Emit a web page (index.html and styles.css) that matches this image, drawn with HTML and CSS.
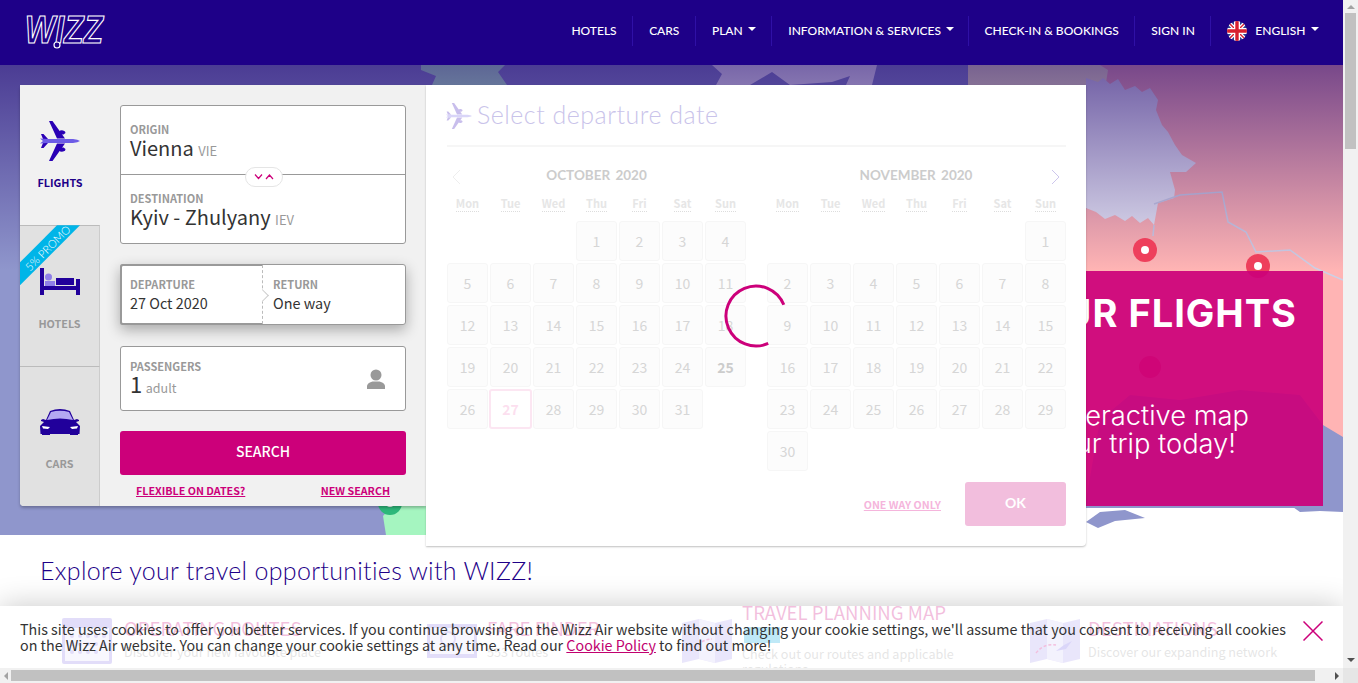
FILE: index.html
```html
<!DOCTYPE html>
<html lang="en">
<head>
<meta charset="utf-8">
<title>Wizz Air</title>
<link rel="stylesheet" href="styles.css">
</head>
<body>
<div class="frame">
  <div class="page">
    <header class="topbar">
      <a class="logo" href="#">
        <svg class="logo-svg" width="110" height="40" viewBox="0 0 110 40"><text class="logo-text" x="3" y="32" textLength="78" lengthAdjust="spacingAndGlyphs">WIZZ</text><circle class="logo-dot" cx="35" cy="34" r="3"/></svg>
      </a>
      <nav class="nav">
        <a class="nav-item">HOTELS</a>
        <a class="nav-item">CARS</a>
        <a class="nav-item">PLAN<i class="caret"></i></a>
        <a class="nav-item nav-info">INFORMATION &amp; SERVICES<i class="caret"></i></a>
        <a class="nav-item">CHECK-IN &amp; BOOKINGS</a>
        <a class="nav-item">SIGN IN</a>
        <a class="nav-item nav-lang">
          <svg class="flag" width="20" height="20" viewBox="0 0 20 20"><defs><clipPath id="fc"><circle cx="10" cy="10" r="10"/></clipPath></defs><g clip-path="url(#fc)"><rect width="20" height="20" fill="#2b3f93"/><path d="M0 0L20 20M20 0L0 20" stroke="#fff" stroke-width="4"/><path d="M0 0L20 20M20 0L0 20" stroke="#d8202f" stroke-width="1.4"/><path d="M10 0V20M0 10H20" stroke="#fff" stroke-width="6"/><path d="M10 0V20M0 10H20" stroke="#d8202f" stroke-width="3.4"/></g></svg>
          ENGLISH<i class="caret"></i>
        </a>
      </nav>
    </header>

    <section class="hero">
      <svg class="map" width="1343" height="470" viewBox="0 65 1343 470">
        <defs><linearGradient id="dim" x1="0" y1="0" x2="0" y2="1"><stop offset="0" stop-color="#1e006e" stop-opacity=".6"/><stop offset="1" stop-color="#1e006e" stop-opacity="0"/></linearGradient></defs>
        <rect x="0" y="65" width="1343" height="470" fill="#8f96cc"/>
        <path fill="#bbffcf" d="M421 65H505L498 72 507 85H432L436 76 421 70Z"/>
        <path fill="#fff" d="M712 65H877L872 85H846L850 76 832 82 790 85 772 72 750 85H716L722 74Z"/>
        <path fill="#fff5c3" d="M968 65H1108V200H968Z"/>
        <path fill="#ffb4b4" d="M1100 65H1343V437L1323 425 1300 395 1240 390 1180 400 1130 395 1100 420 1086 500V210L1108 70Z"/>
        <path fill="#e8e8f4" d="M1086 78L1098 82 1103 78 1110 84 1118 79 1125 90 1135 86 1142 92 1150 88 1158 100 1156 110 1162 125 1168 132 1175 145 1182 155 1196 163 1186 172 1170 172 1175 190 1174 198 1158 203 1154 225 1148 218 1140 223 1132 216 1125 221 1115 215 1105 219 1096 212 1086 208Z"/>
        <path class="border-line" d="M1154 204L1180 195 1222 192 1228 222 1246 232 1256 252 1290 250 1315 268 1343 280"/>
        <path class="border-line" d="M1154 225L1153 236"/>
        <path fill="#a5f5c0" d="M383 516L392 506H426V535H386Z"/>
        <path fill="#fff" d="M1000 508H1343V535H1000Z"/>
        <path fill="#8f96cc" d="M1086 522L1100 512 1125 510 1145 518 1115 521 1098 528ZM1290 505H1343V512L1320 511 1300 512Z"/>
        <rect x="0" y="65" width="1343" height="205" fill="url(#dim)"/>
        <g><circle cx="390" cy="503" r="12" fill="#2db87a"/><circle cx="390" cy="503" r="4" fill="#fff"/></g>
        <g><circle cx="1145" cy="250" r="12" fill="#ee3f5c"/><circle cx="1145" cy="250" r="4" fill="#fff"/></g>
        <g><circle cx="1258" cy="266" r="12" fill="#ee3f5c"/><circle cx="1258" cy="266" r="4" fill="#fff"/></g>
        <g><circle cx="1150" cy="367" r="11" fill="#ee3f5c"/></g>
      </svg>

      <aside class="banner">
        <h2 class="banner-title">PLAN YOUR FLIGHTS</h2>
        <p class="banner-line banner-line-a">Use our interactive map</p>
        <p class="banner-line banner-line-b">and plan your trip today!</p>
      </aside>

      <div class="panel">
        <div class="tabs">
          <div class="tab tab-active">
            <svg class="tab-icon" width="40" height="40" viewBox="0 0 40 40"><g id="plane"><path fill="#2a00b5" d="M9 0h3.500L25 17.500H17ZM9 40h3.500L25 22.500H17ZM1 13h2.500L8 18H3ZM1 27h2.500L8 22H3Z"/><path fill="#2a00b5" d="M19 10.500a3.500 2.500 0 0 1 6.500 1.500l-2 1.500h-3zM19 29.500a3.500 2.500 0 0 0 6.500-1.500l-2-1.500h-3z"/><path fill="#6d5ce6" d="M0 17.500L8 18H33Q38 18.500 40 20 38 21.500 33 22H8L0 22.500 3 20Z"/></g></svg>
            <span class="tab-label">FLIGHTS</span>
          </div>
          <div class="tab">
            <span class="ribbon-band"></span><span class="ribbon-text">5% PROMO</span>
            <svg class="tab-icon" width="40" height="40" viewBox="0 0 40 40"><path fill="#21009b" d="M0 7h4v27H0zM36 18h4v16h-4zM4 25h32v4H4z"/><circle cx="8.500" cy="16" r="3.500" fill="#8f7fe8"/><path fill="#8f7fe8" d="M5 20h10v5H5z"/><path fill="#21009b" d="M16 17h18v7H16z"/></svg>
            <span class="tab-label">HOTELS</span>
          </div>
          <div class="tab tab-cars">
            <svg class="tab-icon" width="40" height="40" viewBox="0 0 40 40"><path fill="#21009b" d="M2 33h8v-2H2zM30 33h8v-2h-8z"/><path fill="#21009b" d="M10 9Q20 5 30 9L34 18 37 17 39 18 39 19 36 20 40 24 39.500 32H.5L0 24 4 20 1 19 1 18 3 17 6 18Z"/><path fill="#b3a8f2" d="M7 18L11 10Q20 7.500 29 10L33 18Q20 15 7 18Z"/><path fill="#fff" d="M2 24L10 25 8 27 3 26.500ZM38 24L30 25 32 27 37 26.500Z"/></svg>
            <span class="tab-label">CARS</span>
          </div>
        </div>
        <form class="form">
          <div class="field route">
            <div class="route-part route-part-origin">
              <label class="field-label">ORIGIN</label>
              <div class="city">Vienna <small class="code">VIE</small></div>
            </div>
            <div class="route-part route-part-dest">
              <label class="field-label">DESTINATION</label>
              <div class="city">Kyiv - Zhulyany <small class="code">IEV</small></div>
            </div>
            <button class="swap" type="button"><svg width="20" height="8" viewBox="0 0 20 8"><path d="M1 1.500L4.500 5.500 8 1.500M12 6L15.500 2 19 6" fill="none" stroke="#cc007a" stroke-width="1.200"/></svg></button>
          </div>
          <div class="field dates">
            <div class="date-part date-active">
              <label class="field-label">DEPARTURE</label>
              <div class="date-value">27 Oct 2020</div>
            </div>
            <div class="date-part date-return">
              <span class="notch"></span>
              <label class="field-label">RETURN</label>
              <div class="date-value">One way</div>
            </div>
          </div>
          <div class="field passengers">
            <div class="pax-info">
              <label class="field-label">PASSENGERS</label>
              <div class="pax"><span class="pax-num">1</span> <small class="pax-unit">adult</small></div>
            </div>
            <svg width="18" height="20" viewBox="0 0 18 20"><circle cx="9" cy="6" r="5.500" fill="#999"/><path d="M0 20V16.500Q1 13.500 5.500 12.500H12.500Q17 13.500 18 16.500V20Z" fill="#999"/></svg>
          </div>
          <button class="search" type="button">SEARCH</button>
          <div class="links"><a class="link">FLEXIBLE ON DATES?</a><a class="link">NEW SEARCH</a></div>
        </form>
      </div>

      <div class="calendar">
        <div class="cal-head">
          <svg class="cal-plane" width="26" height="26" viewBox="0 0 40 40"><use href="#plane"/></svg>
          <h2 class="cal-title">Select departure date</h2>
        </div>
        <div class="months">
          <div class="month">
            <div class="month-head"><svg class="chev" width="9" height="16" viewBox="0 0 9 16"><path d="M8 1L1 8 8 15" fill="none" stroke="#eee"/></svg><h3 class="month-name">OCTOBER 2020</h3><span class="chev-slot"></span></div>
            <div class="weekdays"><abbr>Mon</abbr><abbr>Tue</abbr><abbr>Wed</abbr><abbr>Thu</abbr><abbr>Fri</abbr><abbr>Sat</abbr><abbr>Sun</abbr></div>
            <div class="days">
              <span class="gap-3"></span>
              <span class="day">1</span><span class="day">2</span><span class="day">3</span><span class="day">4</span>
              <span class="day">5</span><span class="day">6</span><span class="day">7</span><span class="day">8</span><span class="day">9</span><span class="day">10</span><span class="day">11</span>
              <span class="day">12</span><span class="day">13</span><span class="day">14</span><span class="day">15</span><span class="day">16</span><span class="day">17</span><span class="day">18</span>
              <span class="day">19</span><span class="day">20</span><span class="day">21</span><span class="day">22</span><span class="day">23</span><span class="day">24</span><span class="day day-bold">25</span>
              <span class="day">26</span><span class="day day-selected">27</span><span class="day">28</span><span class="day">29</span><span class="day">30</span><span class="day">31</span>
            </div>
          </div>
          <div class="month">
            <div class="month-head"><span class="chev-slot"></span><h3 class="month-name">NOVEMBER 2020</h3><svg class="chev chev-next" width="9" height="16" viewBox="0 0 9 16"><path d="M1 1L8 8 1 15" fill="none" stroke="#cdc6ec"/></svg></div>
            <div class="weekdays"><abbr>Mon</abbr><abbr>Tue</abbr><abbr>Wed</abbr><abbr>Thu</abbr><abbr>Fri</abbr><abbr>Sat</abbr><abbr>Sun</abbr></div>
            <div class="days">
              <span class="gap-6"></span>
              <span class="day">1</span>
              <span class="day">2</span><span class="day">3</span><span class="day">4</span><span class="day">5</span><span class="day">6</span><span class="day">7</span><span class="day">8</span>
              <span class="day">9</span><span class="day">10</span><span class="day">11</span><span class="day">12</span><span class="day">13</span><span class="day">14</span><span class="day">15</span>
              <span class="day">16</span><span class="day">17</span><span class="day">18</span><span class="day">19</span><span class="day">20</span><span class="day">21</span><span class="day">22</span>
              <span class="day">23</span><span class="day">24</span><span class="day">25</span><span class="day">26</span><span class="day">27</span><span class="day">28</span><span class="day">29</span>
              <span class="day">30</span>
            </div>
          </div>
        </div>
        <div class="cal-foot"><a class="one-way">ONE WAY ONLY</a><button class="ok" type="button">OK</button></div>
        <svg class="spinner" width="66" height="66" viewBox="0 0 66 66"><path d="M60.800 21.800A30 30 0 1 0 45.200 60.400" fill="none" stroke="#cc007a" stroke-width="3"/></svg>
      </div>
    </section>

    <section class="explore">
      <h2 class="explore-title">Explore your travel opportunities with WIZZ!</h2>
      <div class="cards">
        <div class="card">
          <svg class="card-icon" width="50" height="46" viewBox="0 0 50 46"><rect width="50" height="46" rx="2" fill="#8a78e6"/><rect x="3" y="10" width="44" height="33" fill="#e4e0fb"/><g fill="#8a78e6"><circle cx="10" cy="18" r="2"/><circle cx="18" cy="18" r="2"/><circle cx="26" cy="18" r="2"/><circle cx="34" cy="18" r="2"/><circle cx="42" cy="18" r="2"/><circle cx="10" cy="26" r="2"/><circle cx="18" cy="26" r="2"/><circle cx="26" cy="26" r="2"/><circle cx="34" cy="26" r="2"/><circle cx="42" cy="26" r="2"/><circle cx="10" cy="34" r="2"/><circle cx="18" cy="34" r="2"/><circle cx="26" cy="34" r="2"/><circle cx="34" cy="34" r="2"/></g></svg>
          <div class="card-body"><div class="card-title">OPERATING ROUTES</div><div class="card-sub">Discover your new favourite place</div></div>
        </div>
        <div class="card">
          <svg class="card-icon" width="50" height="34" viewBox="0 0 50 34"><rect width="50" height="34" fill="#8a78e6"/><rect x="3" y="4" width="44" height="26" fill="#e4e0fb"/><circle cx="21" cy="15" r="7" fill="none" stroke="#8a78e6" stroke-width="2"/><path d="M26 20l7 7" stroke="#8a78e6" stroke-width="2"/></svg>
          <div class="card-body"><div class="card-title">FARE FINDER</div><div class="card-sub">553 routes</div></div>
        </div>
        <div class="card card-tall">
          <svg class="card-icon" width="50" height="44" viewBox="0 0 50 44"><path fill="#a99cef" d="M0 4L17 0 33 4 50 0V40L33 44 17 40 0 44Z"/><path fill="#d0c9f8" d="M17 0L33 4V44L17 40Z"/><path d="M8 32Q20 20 30 20" fill="none" stroke="#cc007a" stroke-width="1.500" stroke-dasharray="3 2"/></svg>
          <div class="card-body"><span class="mark"></span><div class="card-title">TRAVEL PLANNING MAP</div><div class="card-sub">Check out our routes and applicable regulations</div></div>
        </div>
        <div class="card">
          <svg class="card-icon" width="50" height="44" viewBox="0 0 50 44"><path fill="#a99cef" d="M0 4L17 0 33 4 50 0V40L33 44 17 40 0 44Z"/><path fill="#d0c9f8" d="M17 0L33 4V44L17 40Z"/><path d="M6 34Q14 24 26 26" fill="none" stroke="#cc007a" stroke-width="1.500" stroke-dasharray="3 2"/><path d="M26 32L34 26 42 22 36 30Z" fill="#6d5ce6"/></svg>
          <div class="card-body"><div class="card-title">DESTINATIONS</div><div class="card-sub">Discover our expanding network</div></div>
        </div>
      </div>
    </section>

    <div class="cookie">
      <p class="cookie-text">This site uses cookies to offer you better services. If you continue browsing on the Wizz Air website without changing your cookie settings, we'll assume that you consent to receiving all cookies on the Wizz Air website. You can change your cookie settings at any time. Read our <a class="cookie-link">Cookie Policy</a> to find out more!</p>
      <svg class="cookie-close" width="20" height="20" viewBox="0 0 20 20"><path d="M.5.5L19.500 19.500M19.500.5L.5 19.500" stroke="#cc007a" stroke-width="1.500"/></svg>
    </div>
  </div>

  <div class="vbar"><i class="arrow arrow-up"></i><div class="vtrack"><div class="vthumb"></div></div><i class="arrow arrow-down"></i></div>
  <div class="hbar"><i class="arrow arrow-left"></i><div class="htrack"><div class="hthumb"></div></div><i class="arrow arrow-right"></i></div>
  <div class="corner"></div>
</div>
</body>
</html>
```
FILE: styles.css
```css
* { box-sizing: border-box; }
html, body { margin: 0; height: 100%; overflow: hidden; }
body { font-family: "Noto Sans CJK JP", "Liberation Sans", sans-serif; color: #333; background: #fff; }
a { text-decoration: none; }
h2, h3, p { margin: 0; font-weight: 400; }

.frame { display: grid; grid-template-columns: 1343px 15px; grid-template-rows: 668px 15px; width: 1358px; height: 683px; }
.page { position: relative; overflow: hidden; background: #fff; }

/* top bar */
.topbar { display: flex; align-items: center; justify-content: space-between; height: 65px; padding: 0 9px 0 22px; background: #1e0088; }
.logo { display: block; height: 40px; margin-top: -3px; }
.logo-svg { display: block; }
.logo-text { font: italic 700 38px "Liberation Sans", sans-serif; fill: none; stroke: #fff; stroke-width: 1.200; }
.logo-dot { fill: #1e0088; stroke: #fff; stroke-width: 1.200; }
.nav { display: flex; align-items: center; margin-top: -4px; }
.nav-item { display: flex; align-items: center; height: 30px; padding: 0 15.500px 0 16px; border-right: 1px solid #2f10a6; color: #fff; font: 500 12px/30px Lato, sans-serif; white-space: nowrap; }
.nav-info { padding-right: 13.500px; }
.nav-lang { border-right: 0; }
.flag { margin-right: 8px; }
.caret { display: inline-block; width: 0; height: 0; margin: -3px 0 0 5px; border: 4px solid transparent; border-top-color: #fff; border-bottom: 0; }

/* hero */
.hero { position: relative; height: 470px; padding: 20px; }
.map { position: absolute; top: 0; left: 0; }
.border-line { fill: none; stroke: #ccd0e6; stroke-width: 1.500; }
.banner { position: absolute; top: 206px; left: 800px; width: 523px; height: 235px; padding-top: 20px; background: rgba(204, 0, 122, .92); color: #fff; font-family: Inter, sans-serif; text-align: right; white-space: nowrap; }
.banner-title { margin-right: 26px; font-size: 38px; font-weight: 700; letter-spacing: 1px; line-height: 44px; }
.banner-line { font-size: 27.300px; font-weight: 300; line-height: 28px; }
.banner-line-a { margin: 67px 74px 0 0; }
.banner-line-b { margin-right: 87px; }

.panel { position: relative; display: flex; width: 406px; height: 421px; border-radius: 4px 0 0 4px; background: #f1f1f1; box-shadow: 0 2px 3px rgba(0, 0, 0, .25); }
.tabs { display: flex; flex-direction: column; width: 80px; flex: none; }
.tab { position: relative; display: flex; flex-direction: column; align-items: center; flex: 1; padding-top: 35px; background: #e1e1e1; border-top: 1px solid #bbb; border-right: 1px solid #ccc; }
.tab-cars { border-radius: 0 0 0 4px; }
.tab-active { padding-top: 36px; background: #f1f1f1; border: 0; }
.tab-label { margin-top: 14px; font-size: 10.800px; font-weight: 700; line-height: 16px; color: #999; }
.tab-active .tab-label { margin-top: 13px; color: #1e0088; }
.tab-cars .tab-label { margin-top: 13px; }
.ribbon-band { position: absolute; top: -1px; left: 0; width: 60px; height: 60px; background: #00b5e8; clip-path: polygon(37px 0, 60px 0, 0 60px, 0 37px); }
.ribbon-text { position: absolute; top: 17px; left: -1px; width: 56px; color: #fff; font: 300 11px/12px Lato, sans-serif; text-align: center; white-space: nowrap; transform: rotate(-45deg); }

.form { display: flex; flex-direction: column; flex: 1; padding: 20px 20px 0; }
.field { position: relative; border: 1px solid #999; border-radius: 3px; background: #fff; }
.field-label { display: block; color: #999; font-size: 11px; font-weight: 700; line-height: 14px; }
.route { height: 139px; }
.route-part { padding: 16px 9px 0; }
.route-part-origin { height: 68px; }
.route-part-dest { height: 70px; border-top: 1px solid #999; padding-top: 16px; }
.city { font-size: 20px; line-height: 24px; white-space: nowrap; }
.code { color: #999; font-size: 13px; }
.swap { position: absolute; top: 61px; left: 124px; display: flex; align-items: center; justify-content: center; width: 38px; height: 20px; padding: 0; border: 1px solid #e5e5e5; border-radius: 10px; background: #fff; }

.dates { display: flex; height: 61px; margin-top: 20px; box-shadow: 0 5px 14px rgba(0, 0, 0, .3); }
.date-part { position: relative; flex: 1; height: 59px; padding: 12px 10px 0; }
.date-active { flex: none; width: 142px; height: 61px; margin: -1px 0 -1px -1px; padding: 11px 10px 0 8px; border: 2px solid #999; border-right: 0; border-radius: 3px 0 0 3px; }
.date-return { border-left: 1px dashed #bbb; }
.notch { position: absolute; top: 26px; left: -5px; width: 9px; height: 9px; background: #fff; border-top: 1px solid #ccc; border-right: 1px solid #ccc; transform: rotate(45deg); }
.date-value { margin-top: 2px; font-size: 14.400px; line-height: 20px; }

.passengers { display: flex; align-items: center; justify-content: space-between; height: 65px; margin-top: 21px; padding: 0 20px 0 9px; }
.pax-info { padding-top: 2px; }
.pax { margin-top: -2px; line-height: 24px; }
.pax-num { font-size: 22px; }
.pax-unit { color: #999; font-size: 12.500px; }

.search { height: 44px; margin-top: 20px; padding-bottom: 6px; border: 0; border-radius: 3px; background: #cc007a; color: #fff; font: 500 14px "Noto Sans CJK JP", sans-serif; }
.links { display: flex; justify-content: space-between; margin-top: 8px; padding: 0 16px; }
.link { color: #cc007a; font-size: 10.700px; font-weight: 700; line-height: 16px; text-decoration: underline; }

/* calendar */
.calendar { position: absolute; top: 20px; left: 426px; width: 660px; height: 461px; padding: 0 20px 0 21px; background: #fff; border-radius: 0 0 4px 0; box-shadow: 0 1px 2px rgba(0, 0, 0, .25); }
.cal-head { display: flex; align-items: center; height: 62px; padding-bottom: 2px; border-bottom: 2px solid #f6f6f6; }
.cal-plane { margin: 4px 5px 0 -1px; opacity: .25; }
.cal-title { color: #c9c3ea; font: 300 25px/30px Lato, sans-serif; letter-spacing: .5px; }
.months { display: flex; gap: 21px; }
.month { width: 299px; }
.month-head { display: flex; align-items: center; justify-content: space-between; height: 20px; margin-top: 18px; padding: 0 5px; }
.month-name { color: #ccc; font: 700 13.500px/20px Lato, sans-serif; word-spacing: 2px; }
.chev, .chev-slot { display: block; flex: none; width: 9px; }
.chev { margin-top: 4px; }
.chev-next { margin-right: 1px; }
.weekdays { display: grid; grid-template-columns: repeat(7, 41px); gap: 2px; margin-top: 11px; text-align: center; }
.weekdays abbr { justify-self: center; color: #e6e6e6; font-size: 11px; font-weight: 700; line-height: 15px; border-bottom: 1px dotted #ddd; }
.days { display: grid; grid-template-columns: repeat(7, 41px); grid-auto-rows: 40px; gap: 2px; height: 250px; margin-top: 9px; }
.gap-3 { grid-column: span 3; }
.gap-6 { grid-column: span 6; }
.day { display: flex; align-items: center; justify-content: center; padding-bottom: 1px; border: 1px solid #f6f6f6; border-radius: 3px; background: #fcfcfc; color: #d6d6d6; font-size: 14px; line-height: 16px; }
.day-bold { color: #ccc; font-weight: 700; }
.day-selected { margin: 0 -1px; border: 2px solid #fce6f2; background: #fff; color: #fcdfef; font-weight: 700; }
.cal-foot { display: flex; align-items: flex-end; justify-content: flex-end; gap: 24px; margin-top: 11px; }
.one-way { margin-bottom: 13px; color: #f5b5dc; font-size: 10.600px; font-weight: 700; line-height: 16px; text-decoration: underline; }
.ok { width: 101px; height: 44px; padding-bottom: 4px; border: 0; border-radius: 3px; background: #f2bedd; color: #fff; font: 700 14px Lato, sans-serif; }
.spinner { position: absolute; top: 198px; left: 297px; }

/* explore */
.explore { padding-top: 20px; }
.explore-title { padding-left: 40px; color: #1e0088; font: 300 25px/30px Lato, sans-serif; letter-spacing: .3px; }
.cards { display: grid; grid-template-columns: 365px 255px 348px 1fr; align-items: center; height: 76px; margin-top: 17px; padding-left: 62px; }
.card { position: relative; display: flex; align-items: center; gap: 10px; }
.card:first-child { gap: 12px; }
.card:last-child { gap: 8px; }
.card-icon { flex: none; }
.card-body { margin-bottom: 6px; }
.card-title { color: #cc007a; font-size: 18.600px; line-height: 20px; white-space: nowrap; }
.card-sub { width: 240px; margin-top: 6px; color: #999; font-size: 12.600px; line-height: 15px; }
.card-tall .card-body { margin-bottom: 4px; }
.card-tall .card-title { margin-bottom: 24px; }
.mark { position: absolute; top: 25px; left: 62px; width: 36px; height: 16px; background: #00a8e0; }

/* cookie notice */
.cookie { position: absolute; left: 0; right: 0; bottom: 0; display: flex; justify-content: space-between; height: 62px; padding: 15px 20px 0; background: rgba(255, 255, 255, .75); box-shadow: 0 0 30px rgba(0, 0, 0, .22); }
.cookie-text { width: 1276px; color: #333; font-size: 14.300px; line-height: 16px; }
.cookie-link { color: #c1006f; text-decoration: underline; }
.cookie-close { flex: none; }

/* browser scrollbars */
.vbar { display: flex; flex-direction: column; align-items: center; background: #f1f1f1; }
.hbar { display: flex; align-items: center; background: #f1f1f1; }
.corner { background: #e6e6e6; }
.vtrack { flex: 1; width: 100%; padding: 0 2px; }
.vthumb { height: 136px; background: #c1c1c1; }
.htrack { flex: 1; height: 100%; padding: 2px 0; }
.hthumb { width: 1304px; height: 11px; background: #c1c1c1; }
.arrow { display: block; flex: none; width: 0; height: 0; margin: 5px; border: 4px solid transparent; }
.arrow-up { margin-bottom: 4px; border-top: 0; border-bottom-color: #a3a3a3; }
.arrow-down { margin-top: 4px; margin-bottom: 6px; border-bottom: 0; border-top-color: #505050; }
.arrow-left { margin-left: 4px; margin-right: 3px; border-left: 0; border-right-color: #a3a3a3; }
.arrow-right { margin-left: 3px; margin-right: 4px; border-right: 0; border-left-color: #505050; }
```
